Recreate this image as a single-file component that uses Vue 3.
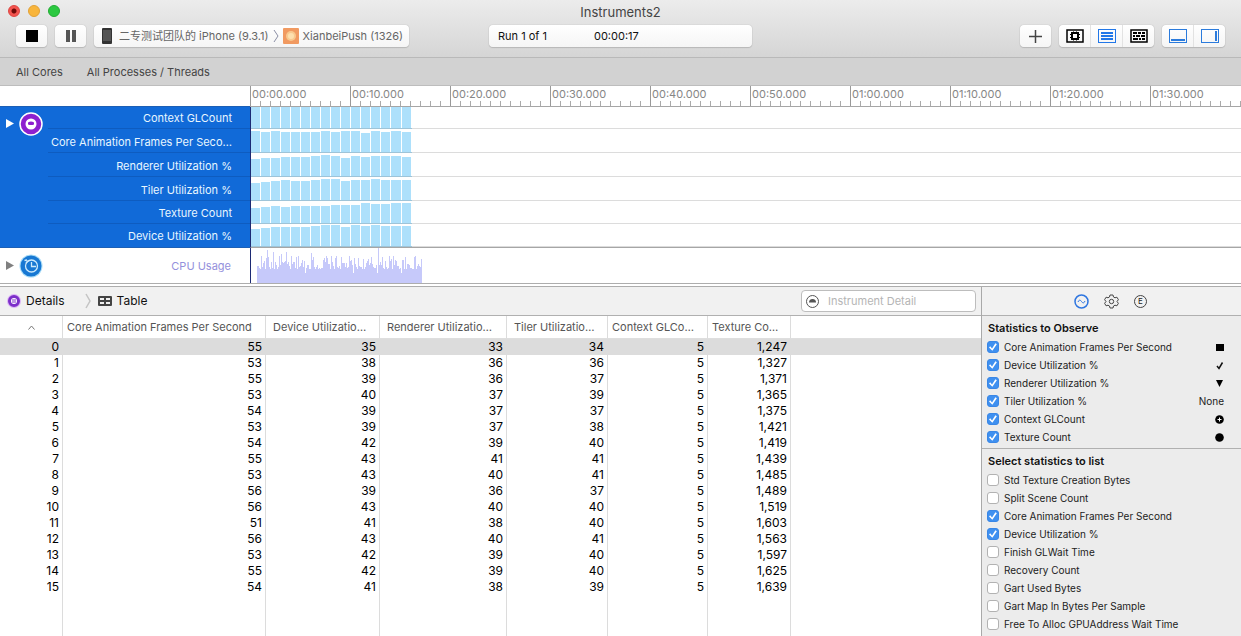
<script setup>
import { ref } from 'vue'

const columns = [
  { title: 'Core Animation Frames Per Second' },
  { title: 'Device Utilizatio…', inset: true },
  { title: 'Renderer Utilizatio…', inset: true },
  { title: 'Tiler Utilizatio…', inset: true },
  { title: 'Context GLCo…' },
  { title: 'Texture Co…' },
]

const samples = [
  [55, 35, 33, 34, 5, 1247],
  [53, 38, 36, 36, 5, 1327],
  [55, 39, 36, 37, 5, 1371],
  [53, 40, 37, 39, 5, 1365],
  [54, 39, 37, 37, 5, 1375],
  [53, 39, 37, 38, 5, 1421],
  [54, 42, 39, 40, 5, 1419],
  [55, 43, 41, 41, 5, 1439],
  [53, 43, 40, 41, 5, 1485],
  [56, 39, 36, 37, 5, 1489],
  [56, 43, 40, 40, 5, 1519],
  [51, 41, 38, 40, 5, 1603],
  [56, 43, 40, 41, 5, 1563],
  [53, 42, 39, 40, 5, 1597],
  [55, 42, 39, 40, 5, 1625],
  [54, 41, 38, 39, 5, 1639],
]
const selected = ref(0)
const detailFilter = ref('')

const barStart = (i) => Math.max(0, Math.round(i * 10.07 - 0.5))
const tracks = [
  { label: 'Context GLCount', column: 4, height: 22 },
  { label: 'Core Animation Frames Per Seco…', column: 0, height: 24 },
  { label: 'Renderer Utilization %', column: 2, height: 24 },
  { label: 'Tiler Utilization %', column: 3, height: 24 },
  { label: 'Texture Count', column: 5, height: 23 },
  { label: 'Device Utilization %', column: 1, height: 23 },
].map((track) => {
  const values = samples.map((row) => row[track.column])
  const peak = Math.max(...values)
  const full = track.column === 5 ? 21 : 22
  return {
    ...track,
    bars: values.map((value, i) => {
      const h = Math.round((value / peak) * full)
      const x = barStart(i)
      return { x, w: barStart(i + 1) - x - 1, h, y: track.height - h }
    }),
  }
})

// One-pixel columns of CPU load, with a few tall spikes.
const spikes = { 4: 27, 10: 33, 16: 31, 24: 29, 29: 31, 41: 27, 54: 30, 69: 27, 78: 25, 97: 25, 121: 35, 132: 27, 148: 26 }
let seed = 17
const cpu = Array.from({ length: 165 }, (_, i) => {
  seed = (seed * 1103515245 + 12345) % 2147483648
  const noise = seed / 2147483648
  return spikes[i] ?? Math.round(14 + noise * noise * 13 - (i % 24 === 0 ? 4 : 0))
})
const cpuPath = 'M6 35' + cpu.map((h) => `V${35 - h}h1`).join('') + 'V35Z'

const marks = Array.from({ length: 10 }, (_, i) => {
  const s = i * 10
  const pad = (n) => String(n).padStart(2, '0')
  return `${pad(Math.floor(s / 60))}:${pad(s % 60)}.000`
})

const observed = ref([
  { name: 'Core Animation Frames Per Second', on: true, mark: 'square' },
  { name: 'Device Utilization %', on: true, mark: 'check' },
  { name: 'Renderer Utilization %', on: true, mark: 'triangle' },
  { name: 'Tiler Utilization %', on: true, mark: 'none' },
  { name: 'Context GLCount', on: true, mark: 'plus' },
  { name: 'Texture Count', on: true, mark: 'circle' },
])
const available = ref([
  { name: 'Std Texture Creation Bytes', on: false },
  { name: 'Split Scene Count', on: false },
  { name: 'Core Animation Frames Per Second', on: true },
  { name: 'Device Utilization %', on: true },
  { name: 'Finish GLWait Time', on: false },
  { name: 'Recovery Count', on: false },
  { name: 'Gart Used Bytes', on: false },
  { name: 'Gart Map In Bytes Per Sample', on: false },
  { name: 'Free To Alloc GPUAddress Wait Time', on: false },
])
</script>

<template>
  <div class="window">
    <header class="chrome">
      <div class="title-row">
        <div class="lights">
          <button class="light red" aria-label="Close"></button>
          <button class="light yellow" aria-label="Minimise"></button>
          <button class="light green" aria-label="Zoom"></button>
        </div>
        <h1>Instruments2</h1>
      </div>
      <div class="toolbar">
        <div class="tools">
          <button class="tool" aria-label="Stop">
            <svg width="12" height="12"><rect width="12" height="12" /></svg>
          </button>
          <button class="tool" aria-label="Pause">
            <svg width="10" height="12" fill="#555"><rect width="4" height="12" /><rect x="6" width="4" height="12" /></svg>
          </button>
          <button class="target">
            <svg width="10" height="16"><rect width="10" height="16" rx="1" fill="#333" /><rect x="1" y="2" width="8" height="11" fill="#555" /></svg>
            <span class="device">二专测试团队的 iPhone (9.3.1)</span>
            <svg class="chevron" width="6" height="14" fill="none" stroke="#8b8fa5"><path d="M1 1l4 6-4 6" /></svg>
            <svg width="16" height="16"><rect width="16" height="16" rx="1" fill="#f19a61" /><circle cx="8" cy="8" r="5" fill="#f8c98f" /><circle cx="8" cy="8" r="3" fill="#fde0ae" /></svg>
            <span class="app">XianbeiPush (1326)</span>
          </button>
        </div>
        <div class="status"><span>Run 1 of 1</span><span>00:00:17</span></div>
        <div class="tools end">
          <button class="tool" aria-label="Add instrument">
            <svg width="13" height="13" stroke="#444" stroke-width="1.5"><path d="M6.5 0v13M0 6.5h13" /></svg>
          </button>
          <div class="group">
            <button aria-label="CPU strategy">
              <svg width="18" height="14" fill="none" stroke="#000"><rect x="1" y="1" width="16" height="12" stroke-width="1.5" /><rect x="6" y="4" width="6" height="6" stroke-width="2" /><path d="M7.500 2.500v1M10.500 2.500v1M7.500 10.500v1M10.500 10.500v1M4 5.500h1M4 8.500h1M13 5.500h1M13 8.500h1" /></svg>
            </button>
            <button aria-label="Instruments strategy">
              <svg width="18" height="14" fill="none" stroke="#2177e8"><rect x=".5" y=".5" width="17" height="13" /><path d="M3 4h12M3 7h12M3 10h12" stroke-width="2" /></svg>
            </button>
            <button aria-label="Threads strategy">
              <svg width="18" height="14" fill="none" stroke="#000"><rect x="1" y="1" width="16" height="12" stroke-width="1.5" /><path d="M3 4h4M8 4h3M12 4h3M3 7h2M6 7h4M11 7h4M3 10h5M9 10h2M12 10h3" stroke-width="2" /></svg>
            </button>
          </div>
          <div class="group">
            <button aria-label="Toggle detail pane">
              <svg width="18" height="14" fill="none" stroke="#2b7bdc"><rect x=".5" y=".5" width="17" height="13" /><path d="M2 11h14" stroke-width="2" /></svg>
            </button>
            <button aria-label="Toggle inspector">
              <svg width="18" height="14" fill="none" stroke="#2b7bdc"><rect x=".5" y=".5" width="17" height="13" /><path d="M15 2v10" stroke-width="2" /></svg>
            </button>
          </div>
        </div>
      </div>
    </header>

    <nav class="filters">
      <button>All Cores</button>
      <button>All Processes / Threads</button>
    </nav>

    <section class="timeline">
      <div class="corner"></div>
      <div class="ruler">
        <div v-for="mark in marks" :key="mark" class="mark">{{ mark }}</div>
      </div>

      <div class="gpu-head">
        <button class="disclose" aria-label="Expand graphics">
          <svg width="8" height="9" fill="#fff"><path d="M0 0l8 4.500-8 4.500z" /></svg>
        </button>
        <svg class="badge" width="24" height="24" viewBox="0 0 24 24">
          <circle cx="12" cy="12" r="11" fill="#8d20cf" stroke="#fff" stroke-width="1.500" />
          <circle cx="12" cy="12" r="5.500" fill="#fff" />
          <path d="M9 10.500q3-2 6 0v2q-3 1-6 0z" fill="#8d20cf" />
        </svg>
        <div class="labels">
          <div v-for="t in tracks" :key="t.label" class="label" :style="{ height: t.height + 'px' }">{{ t.label }}</div>
        </div>
      </div>
      <div class="plots">
        <svg v-for="t in tracks" :key="t.label" class="plot" width="100%" :height="t.height">
          <rect v-for="b in t.bars" :key="b.x" :x="b.x" :y="b.y" :width="b.w" :height="b.h" fill="#ade0fb" />
          <path :d="`M0 ${t.height - 0.5}h161`" stroke="#9fc4d8" />
          <path :d="`M161 ${t.height - 0.5}h3000`" stroke="#dcdcdc" />
        </svg>
      </div>

      <div class="cpu-head">
        <button class="disclose" aria-label="Expand CPU usage">
          <svg width="8" height="9" fill="#808080"><path d="M0 0l8 4.500-8 4.500z" /></svg>
        </button>
        <svg class="badge" width="24" height="24" viewBox="0 0 24 24" fill="none">
          <circle cx="12" cy="12" r="11.500" fill="#a9dcf7" />
          <circle cx="12" cy="12" r="10.500" fill="#1778d3" />
          <circle cx="12.500" cy="12" r="6" stroke="#cdeafc" stroke-width="1.300" />
          <path d="M12.500 8v4.500H17M5.500 6.500l2.500-.5M7 9l2.500-2.500" stroke="#cdeafc" stroke-width="1.300" />
        </svg>
        <span>CPU Usage</span>
      </div>
      <div class="cpu-plot">
        <svg width="180" height="35"><path :d="cpuPath" fill="#c6c9fa" /></svg>
      </div>
    </section>

    <div class="splitter"></div>

    <main class="lower">
      <section class="detail">
        <div class="detail-bar">
          <button class="crumb">
            <svg width="14" height="14"><circle cx="7" cy="7" r="7" fill="#dcb4f6" /><circle cx="7" cy="7" r="4.500" fill="#fff" stroke="#7c2fc9" stroke-width="3" /><path d="M5 6h4M5 8h4" stroke="#7c2fc9" /></svg>
            Details
          </button>
          <svg class="sep" width="6" height="16" fill="none" stroke="#c4c4c4" stroke-width="1.500"><path d="M1 1l4 7-4 7" /></svg>
          <button class="crumb">
            <svg width="14" height="10"><rect width="14" height="10" rx="1" fill="#444" /><path d="M2 2h4v2H2zM8 2h4v2H8zM2 6h4v2H2zM8 6h4v2H8z" fill="#f1f1f1" /></svg>
            Table
          </button>
          <label class="search">
            <svg width="13" height="13" fill="none" stroke="#555"><circle cx="6.500" cy="6.500" r="6" /><path d="M3 7.500a3.500 3.500 0 0 1 7 0z" fill="#555" stroke="none" /></svg>
            <input v-model="detailFilter" type="text" placeholder="Instrument Detail" aria-label="Instrument Detail" />
          </label>
        </div>
        <table>
          <colgroup>
            <col class="c-index" /><col class="c-fps" /><col class="c-device" /><col class="c-renderer" />
            <col class="c-tiler" /><col class="c-context" /><col class="c-texture" /><col />
          </colgroup>
          <thead>
            <tr>
              <th class="sort" aria-label="Sample"><svg width="7" height="5" fill="none" stroke="#777"><path d="M.5 4.500l3-3.500 3 3.500" /></svg></th>
              <th v-for="c in columns" :key="c.title" :class="{ inset: c.inset }">{{ c.title }}</th>
              <th></th>
            </tr>
          </thead>
          <tbody>
            <tr v-for="(row, i) in samples" :key="i" :class="{ selected: i === selected }" @click="selected = i">
              <td>{{ i }}</td>
              <td v-for="(v, j) in row" :key="j">{{ v.toLocaleString('en-US') }}</td>
              <td></td>
            </tr>
            <tr class="rest"><td v-for="n in 8" :key="n"></td></tr>
          </tbody>
        </table>
      </section>

      <aside class="inspector">
        <div class="tabs">
          <button aria-label="Record settings">
            <svg width="15" height="15" fill="none" stroke="#2f76e0"><circle cx="7.500" cy="7.500" r="6.500" stroke-width="1.500" /><path d="M4 8q1.500-3.500 3.500-.5t3.500-.5" /></svg>
          </button>
          <button aria-label="Display settings">
            <svg width="15" height="15" viewBox="0 0 15 15" fill="none" stroke="#444"><path d="M6 1h3l.5 2 1.500.8 1.900-.6 1.500 2.500-1.400 1.800 1.400 1.800-1.500 2.500-1.900-.6-1.500.8-.5 2H6l-.5-2-1.500-.8-1.900.6L.6 9.300 2 7.500.6 5.700l1.500-2.500 1.900.6L5.500 3z" /><circle cx="7.500" cy="7.500" r="2.200" /></svg>
          </button>
          <button aria-label="Extended detail"><span class="e-icon">E</span></button>
        </div>
        <div class="stats">
          <h2>Statistics to Observe</h2>
          <div v-for="s in observed" :key="s.name" class="stat">
            <label><input v-model="s.on" type="checkbox" />{{ s.name }}</label>
            <button class="marker" :aria-label="s.mark">
              <template v-if="s.mark === 'none'">None</template>
              <svg v-else width="9" height="9" viewBox="0 0 9 9">
                <rect v-if="s.mark === 'square'" x="1" y="1" width="8" height="7" />
                <path v-else-if="s.mark === 'check'" d="M2 5l2 2.500 3.500-6" fill="none" stroke="#111" stroke-width="1.500" />
                <path v-else-if="s.mark === 'triangle'" d="M1 1h7L4.500 8z" />
                <template v-else>
                  <circle cx="4.500" cy="4.500" r="4.300" />
                  <path v-if="s.mark === 'plus'" d="M4.500 2.500v4M2.500 4.500h4" stroke="#fff" />
                </template>
              </svg>
            </button>
          </div>
        </div>
        <div class="stats">
          <h2>Select statistics to list</h2>
          <div v-for="s in available" :key="s.name" class="stat">
            <label><input v-model="s.on" type="checkbox" />{{ s.name }}</label>
          </div>
        </div>
      </aside>
    </main>
  </div>
</template>

<style>
body { margin: 0; }
</style>

<style scoped>
* { box-sizing: border-box; }
.window {
  display: flex;
  flex-direction: column;
  height: 100vh;
  overflow: hidden;
  background: #fff;
  font: 11px/16px Inter, "Noto Sans CJK SC", sans-serif;
  color: #222;
}
button { border: 0; padding: 0; margin: 0; background: none; font: inherit; color: inherit; }
svg { display: block; flex: none; }

.chrome { background: linear-gradient(#ececec, #d5d5d5); border-bottom: 1px solid #b9b9b9; }
.title-row { display: grid; grid-template-columns: 1fr auto 1fr; align-items: center; height: 24px; padding: 0 8px; }
.title-row h1 { margin: 0; font-size: 13px; font-weight: 400; color: #444; }
.lights { display: flex; gap: 8px; padding-bottom: 2px; }
.light { width: 12px; height: 12px; border-radius: 50%; }
.red { background: radial-gradient(#6e0a08 0 2px, #f4544f 3px); border: 1px solid #dd4440; }
.yellow { background: #f8b53c; border: 1px solid #e2a136; }
.green { background: #2bc840; border: 1px solid #22ac33; }
.toolbar { display: grid; grid-template-columns: 1fr 263px 1fr; align-items: center; height: 33px; padding: 0 16px 9px; }
.tools { display: flex; gap: 8px; }
.end { justify-content: flex-end; }
.tool, .target, .status, .group {
  display: flex;
  align-items: center;
  height: 22px;
  border-radius: 4px;
  background: linear-gradient(#fff, #f5f5f5);
  box-shadow: 0 0 1px #999, 0 1px 1px #bbb;
}
.tool { width: 31px; justify-content: center; }
.target { padding: 0 6px 0 8px; color: #666; white-space: nowrap; }
.device { margin-left: 7px; }
.chevron { margin: 0 4px; }
.app { margin-left: 4px; }
.status { padding: 0 9px; gap: 47px; color: #111; }
.group button { display: flex; align-items: center; justify-content: center; width: 31px; height: 22px; }
.group button + button { width: 32px; border-left: 1px solid #e2e2e2; }

.filters { display: flex; gap: 24px; align-items: center; height: 28px; padding: 0 16px; background: #d2d2d2; border-bottom: 1px solid #bdbdbd; color: #444; }

.timeline { display: grid; grid-template-columns: 250px minmax(0, 1fr); }
.corner { border-bottom: 1px solid #1c5fb5; }
.ruler {
  display: flex;
  overflow: hidden;
  height: 21px;
  border-bottom: 1px solid #a6a6a6;
  background: repeating-linear-gradient(90deg, #aaa 0 1px, transparent 1px 10px) bottom / 100% 5px no-repeat;
}
.mark { flex: none; width: 100px; padding-left: 1px; border-left: 1px solid #999; color: #868686; }
.gpu-head { display: flex; background: #116ad8; border-bottom: 1px solid #1c5fb5; color: #e8f6ff; }
.gpu-head .disclose { margin-top: 12px; }
.gpu-head .badge { margin-top: 5px; }
.disclose { align-self: flex-start; margin-left: 6px; }
.badge { margin-left: 5px; }
.labels { flex: 1; margin-left: 5px; }
.label { display: flex; align-items: center; justify-content: flex-end; padding-right: 18px; border-bottom: 1px solid #0e5cc0; white-space: nowrap; }
.label:not(:first-child):not(:last-child) { padding-top: 2px; }
.label:last-child { border-bottom: 0; }
.plots, .cpu-plot { border-left: 1px solid #1c2a74; overflow: hidden; }
.plots { border-bottom: 1px solid #a6a6a6; }
.cpu-head { display: flex; align-items: center; height: 35px; color: #9490dc; }
.cpu-head .disclose { align-self: center; }
.cpu-head span { margin-left: auto; padding-right: 19px; }
.splitter { flex: none; height: 4px; border: solid #adadad; border-width: 1px 0; background: #fff; }

.lower { flex: 1; display: grid; grid-template-columns: minmax(0, 1fr) 260px; grid-template-rows: minmax(0, 1fr); min-height: 0; }
.detail { display: flex; flex-direction: column; min-height: 0; }
.detail-bar { display: flex; flex: none; align-items: center; height: 29px; padding: 0 5px 0 7px; background: #f1f1f1; border-bottom: 1px solid #b0b0b0; }
.crumb { display: flex; align-items: center; gap: 5px; font-size: 12px; color: #111; }
.sep { margin: 0 7px 0 20px; }
.search { display: flex; align-items: center; gap: 9px; width: 175px; height: 22px; margin-left: auto; padding: 0 4px; border: 1px solid #bdbdbd; border-radius: 4px; background: #fff; }
.search input { flex: 1; min-width: 0; border: 0; padding: 0; outline: 0; background: none; font: inherit; }
.search input::placeholder { color: #b5b5b5; }

table { flex: 1; width: 100%; min-height: 0; table-layout: fixed; border-collapse: separate; border-spacing: 0; }
.c-index { width: 63px; }
.c-fps { width: 203px; }
.c-device { width: 114px; }
.c-renderer { width: 127px; }
.c-tiler { width: 101px; }
.c-context { width: 100px; }
.c-texture { width: 83px; }
th, td { padding: 0; border-right: 1px solid #dcdcdc; white-space: nowrap; }
th { height: 23px; padding-left: 4px; border-bottom: 1px solid #dedede; text-align: left; font-weight: 400; color: #555; }
th.inset { padding-left: 7px; }
th.sort { padding: 0; }
.sort svg { margin: 0 auto; }
td { height: 16px; padding-right: 3px; text-align: right; font-size: 12px; line-height: 16px; color: #000; }
th:last-child, td:last-child { border-right: 0; }
.selected td { background: #dcdcdc; }
.rest td { height: auto; }

.inspector { background: #ececec; border-left: 1px solid #a9a9a9; min-height: 0; overflow: hidden; }
.tabs { display: flex; justify-content: center; align-items: center; gap: 15px; height: 29px; padding-right: 2px; background: #f1f1f1; border-bottom: 1px solid #b0b0b0; }
.e-icon { display: block; width: 13px; height: 13px; border: 1px solid #444; border-radius: 50%; font-size: 8px; line-height: 11px; text-align: center; }
.stats { padding: 3px 17px 2px 5px; font-size: 10px; }
.stats + .stats { border-top: 1px solid #b0b0b0; }
h2 { margin: 0 0 1px; padding-left: 1px; font-size: 11px; line-height: 18px; font-weight: 600; color: #111; }
.stat { display: flex; justify-content: space-between; align-items: center; height: 18px; }
.stat label { display: flex; align-items: center; gap: 5px; white-space: nowrap; }
.stat input { appearance: none; display: grid; place-items: center; width: 12px; height: 12px; margin: 0; border: 1px solid #b2b2b2; border-radius: 3px; background: #fff; }
.stat input:checked { border-color: #3a87e6; background: #3f90f0; }
.stat input:checked::after { content: ""; width: 8px; height: 8px; background: #fff; clip-path: polygon(0 55%, 15% 42%, 38% 68%, 80% 2%, 98% 15%, 42% 98%); }
</style>
